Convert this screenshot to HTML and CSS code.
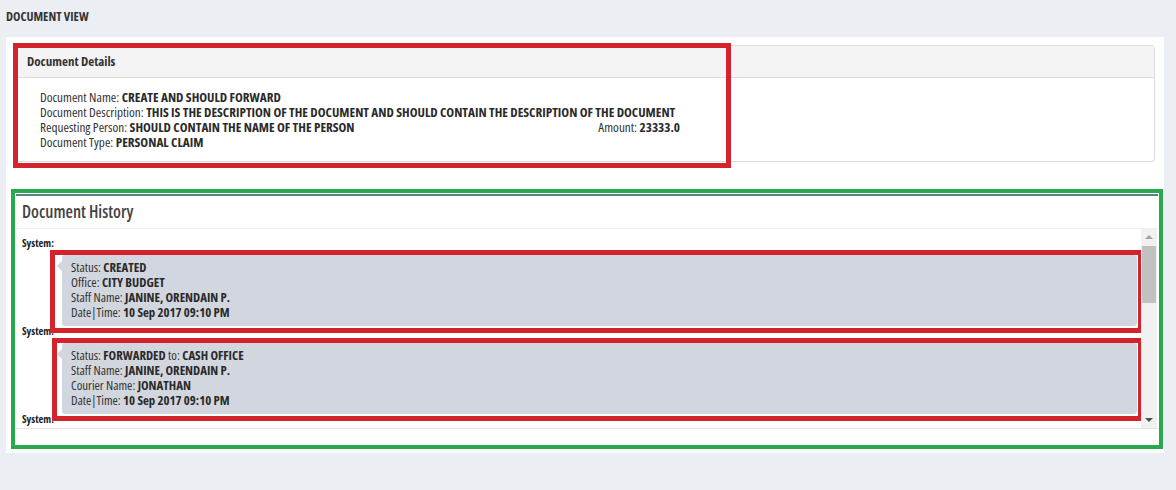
FILE: index.html
```html
<!DOCTYPE html>
<html>
<head>
<meta charset="utf-8">
<link rel="stylesheet" href="styles.css">
</head>
<body>
<div class="page">
  <h1 class="page-title">DOCUMENT VIEW</h1>
  <div class="card">
    <section class="details">
      <div class="details-head">Document Details</div>
      <div class="details-body">
        <div class="line">Document Name: <b>CREATE AND SHOULD FORWARD</b></div>
        <div class="line">Document Description: <b>THIS IS THE DESCRIPTION OF THE DOCUMENT AND SHOULD CONTAIN THE DESCRIPTION OF THE DOCUMENT</b></div>
        <div class="line split"><span>Requesting Person: <b>SHOULD CONTAIN THE NAME OF THE PERSON</b></span><span>Amount: <b>23333.0</b></span></div>
        <div class="line">Document Type: <b>PERSONAL CLAIM</b></div>
      </div>
      <div class="mark mark-details"></div>
    </section>

    <div class="green-frame">
      <section class="history">
        <div class="history-head">Document History</div>
        <div class="history-scroll">
          <div class="history-list">
            <div class="entry">
              <div class="who">System:</div>
              <div class="bubble">
                <div>Status: <b>CREATED</b></div>
                <div>Office: <b>CITY BUDGET</b></div>
                <div>Staff Name: <b>JANINE, ORENDAIN P.</b></div>
                <div>Date|Time: <b>10 Sep 2017 09:10 PM</b></div>
                <div class="mark mark-bubble"></div>
              </div>
            </div>
            <div class="entry">
              <div class="who">System:</div>
              <div class="bubble">
                <div>Status: <b>FORWARDED</b> to: <b>CASH OFFICE</b></div>
                <div>Staff Name: <b>JANINE, ORENDAIN P.</b></div>
                <div>Courier Name: <b>JONATHAN</b></div>
                <div>Date|Time: <b>10 Sep 2017 09:10 PM</b></div>
                <div class="mark mark-bubble mark-bubble-2"></div>
              </div>
            </div>
            <div class="entry">
              <div class="who">System:</div>
              <div class="bubble">
                <div>Status: <b>RECEIVED</b></div>
                <div>Office: <b>CASH OFFICE</b></div>
                <div>Staff Name: <b>JONATHAN</b></div>
                <div>Date|Time: <b>10 Sep 2017 09:12 PM</b></div>
              </div>
            </div>
          </div>
          <div class="scrollbar">
            <div class="arrow up"></div>
            <div class="track"><div class="thumb"></div></div>
            <div class="arrow down"></div>
          </div>
        </div>
      </section>
    </div>
  </div>
</div>
</body>
</html>
```

FILE: styles.css
```css
* { box-sizing: border-box; }
html, body { margin: 0; padding: 0; }
body {
  background: #ebeef3;
  font-family: "Open Sans", Lato, sans-serif;
  font-stretch: 87.5%;
  color: #333;
  width: 1176px;
  height: 490px;
  overflow: hidden;
}
b { font-weight: 700; color: #2a2a2a; }

.page { padding: 0 6px; }

.page-title {
  margin: 0;
  padding-top: 10px;
  height: 37px;
  font-size: 12.5px;
  line-height: 14px;
  font-weight: 700;
  color: #333;
}

.card {
  background: #fff;
  width: 1158px;
  height: 416px;
  padding: 8px 8px 0 9px;
}

.details {
  position: relative;
  width: 1140px;
  border: 1px solid #dcdcdc;
  border-radius: 3px;
}
.details-head {
  height: 32px;
  background: #f4f4f4;
  border-bottom: 1px solid #dcdcdc;
  padding-left: 11px;
  font-size: 13px;
  font-weight: 700;
  line-height: 31px;
  color: #333;
}
.details-body {
  padding: 12px 0 11px 24px;
  font-size: 13.2px;
  line-height: 15px;
}
.details-body .split {
  width: 640px;
  display: flex;
  justify-content: space-between;
}

.mark {
  position: absolute;
  border: 5px solid #d3232c;
  pointer-events: none;
}
.mark-details {
  left: -3px;
  top: -3px;
  width: 718px;
  height: 125px;
}

.green-frame {
  margin: 27px 0 0 -4px;
  width: 1152px;
  border: 4px solid #26aa4b;
  padding: 1px 1px 0 1px;
}

.history {
  border-top: 2px solid #5f7f89;
  background: #fff;
}
.history-head {
  height: 33px;
  border-bottom: 1px solid #efefef;
  padding-left: 6px;
  font-size: 17px;
  line-height: 32px;
  font-weight: 600;
  color: #444;
}
.history-scroll {
  display: flex;
  height: 200px;
  margin-bottom: 16px;
  border-bottom: 1px solid #e4e4e4;
}
.history-list {
  flex: 1;
  overflow: hidden;
  padding: 9px 4px 0 6px;
}
.who {
  font-size: 10.5px;
  font-weight: 700;
  line-height: 11px;
  height: 11px;
  color: #222;
}
.bubble {
  position: relative;
  margin: 6px 0 0 40px;
  background: #d2d6de;
  border-radius: 3px;
  padding: 5px 9px;
  font-size: 12.8px;
  line-height: 15px;
  height: 71px;
  color: #333;
}
.bubble::before {
  content: "";
  position: absolute;
  left: -5px;
  top: 6px;
  border-style: solid;
  border-width: 5px 5px 5px 0;
  border-color: transparent #d2d6de transparent transparent;
}
.mark-bubble {
  left: -12px;
  top: -5px;
  right: -6px;
  bottom: -7px;
}
.mark-bubble-2 { left: -10px; }

.scrollbar {
  width: 16px;
  margin-right: 1px;
  background: #f1f1f1;
  display: flex;
  flex-direction: column;
  align-items: center;
}
.arrow {
  height: 17px;
  width: 16px;
  position: relative;
}
.arrow::after {
  content: "";
  position: absolute;
  left: 4px;
  border-left: 4px solid transparent;
  border-right: 4px solid transparent;
}
.arrow.up::after { top: 6px; border-bottom: 4px solid #a3a3a3; }
.arrow.down::after { top: 7px; border-top: 4px solid #505050; }
.track { flex: 1; width: 100%; padding: 0 1px; }
.thumb {
  height: 57px;
  background: #c1c1c1;
}
```
